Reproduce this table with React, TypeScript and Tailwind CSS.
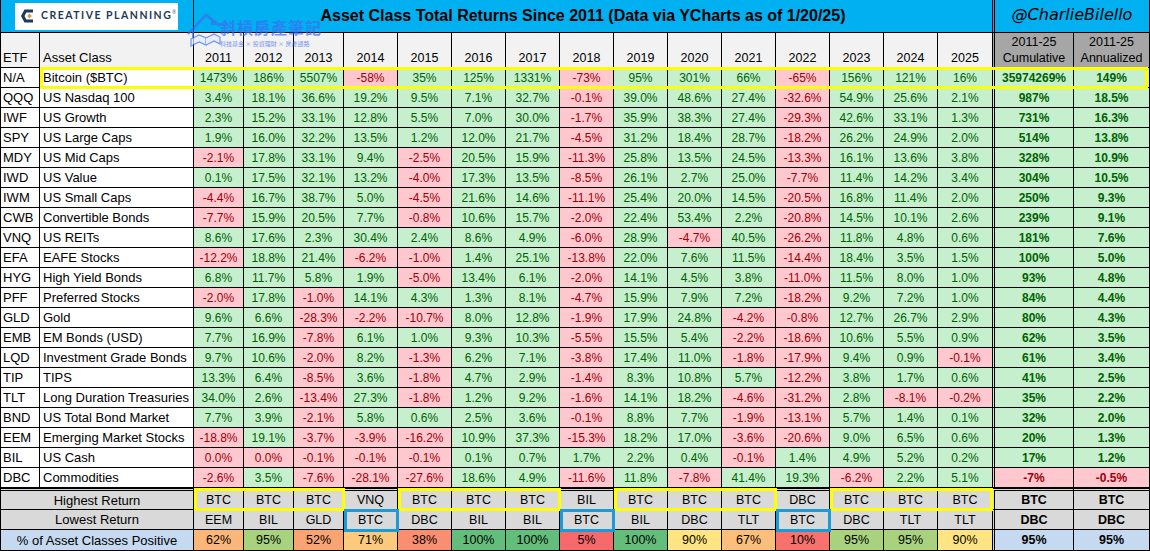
import React from 'react';

type Row = [string, string, string[], string, string];

const rows: Row[] = [
  ['N/A', 'Bitcoin ($BTC)', ['1473%', '186%', '5507%', '-58%', '35%', '125%', '1331%', '-73%', '95%', '301%', '66%', '-65%', '156%', '121%', '16%'], '35974269%', '149%'],
  ['QQQ', 'US Nasdaq 100', ['3.4%', '18.1%', '36.6%', '19.2%', '9.5%', '7.1%', '32.7%', '-0.1%', '39.0%', '48.6%', '27.4%', '-32.6%', '54.9%', '25.6%', '2.1%'], '987%', '18.5%'],
  ['IWF', 'US Growth', ['2.3%', '15.2%', '33.1%', '12.8%', '5.5%', '7.0%', '30.0%', '-1.7%', '35.9%', '38.3%', '27.4%', '-29.3%', '42.6%', '33.1%', '1.3%'], '731%', '16.3%'],
  ['SPY', 'US Large Caps', ['1.9%', '16.0%', '32.2%', '13.5%', '1.2%', '12.0%', '21.7%', '-4.5%', '31.2%', '18.4%', '28.7%', '-18.2%', '26.2%', '24.9%', '2.0%'], '514%', '13.8%'],
  ['MDY', 'US Mid Caps', ['-2.1%', '17.8%', '33.1%', '9.4%', '-2.5%', '20.5%', '15.9%', '-11.3%', '25.8%', '13.5%', '24.5%', '-13.3%', '16.1%', '13.6%', '3.8%'], '328%', '10.9%'],
  ['IWD', 'US Value', ['0.1%', '17.5%', '32.1%', '13.2%', '-4.0%', '17.3%', '13.5%', '-8.5%', '26.1%', '2.7%', '25.0%', '-7.7%', '11.4%', '14.2%', '3.4%'], '304%', '10.5%'],
  ['IWM', 'US Small Caps', ['-4.4%', '16.7%', '38.7%', '5.0%', '-4.5%', '21.6%', '14.6%', '-11.1%', '25.4%', '20.0%', '14.5%', '-20.5%', '16.8%', '11.4%', '2.0%'], '250%', '9.3%'],
  ['CWB', 'Convertible Bonds', ['-7.7%', '15.9%', '20.5%', '7.7%', '-0.8%', '10.6%', '15.7%', '-2.0%', '22.4%', '53.4%', '2.2%', '-20.8%', '14.5%', '10.1%', '2.6%'], '239%', '9.1%'],
  ['VNQ', 'US REITs', ['8.6%', '17.6%', '2.3%', '30.4%', '2.4%', '8.6%', '4.9%', '-6.0%', '28.9%', '-4.7%', '40.5%', '-26.2%', '11.8%', '4.8%', '0.6%'], '181%', '7.6%'],
  ['EFA', 'EAFE Stocks', ['-12.2%', '18.8%', '21.4%', '-6.2%', '-1.0%', '1.4%', '25.1%', '-13.8%', '22.0%', '7.6%', '11.5%', '-14.4%', '18.4%', '3.5%', '1.5%'], '100%', '5.0%'],
  ['HYG', 'High Yield Bonds', ['6.8%', '11.7%', '5.8%', '1.9%', '-5.0%', '13.4%', '6.1%', '-2.0%', '14.1%', '4.5%', '3.8%', '-11.0%', '11.5%', '8.0%', '1.0%'], '93%', '4.8%'],
  ['PFF', 'Preferred Stocks', ['-2.0%', '17.8%', '-1.0%', '14.1%', '4.3%', '1.3%', '8.1%', '-4.7%', '15.9%', '7.9%', '7.2%', '-18.2%', '9.2%', '7.2%', '1.0%'], '84%', '4.4%'],
  ['GLD', 'Gold', ['9.6%', '6.6%', '-28.3%', '-2.2%', '-10.7%', '8.0%', '12.8%', '-1.9%', '17.9%', '24.8%', '-4.2%', '-0.8%', '12.7%', '26.7%', '2.9%'], '80%', '4.3%'],
  ['EMB', 'EM Bonds (USD)', ['7.7%', '16.9%', '-7.8%', '6.1%', '1.0%', '9.3%', '10.3%', '-5.5%', '15.5%', '5.4%', '-2.2%', '-18.6%', '10.6%', '5.5%', '0.9%'], '62%', '3.5%'],
  ['LQD', 'Investment Grade Bonds', ['9.7%', '10.6%', '-2.0%', '8.2%', '-1.3%', '6.2%', '7.1%', '-3.8%', '17.4%', '11.0%', '-1.8%', '-17.9%', '9.4%', '0.9%', '-0.1%'], '61%', '3.4%'],
  ['TIP', 'TIPS', ['13.3%', '6.4%', '-8.5%', '3.6%', '-1.8%', '4.7%', '2.9%', '-1.4%', '8.3%', '10.8%', '5.7%', '-12.2%', '3.8%', '1.7%', '0.6%'], '41%', '2.5%'],
  ['TLT', 'Long Duration Treasuries', ['34.0%', '2.6%', '-13.4%', '27.3%', '-1.8%', '1.2%', '9.2%', '-1.6%', '14.1%', '18.2%', '-4.6%', '-31.2%', '2.8%', '-8.1%', '-0.2%'], '35%', '2.2%'],
  ['BND', 'US Total Bond Market', ['7.7%', '3.9%', '-2.1%', '5.8%', '0.6%', '2.5%', '3.6%', '-0.1%', '8.8%', '7.7%', '-1.9%', '-13.1%', '5.7%', '1.4%', '0.1%'], '32%', '2.0%'],
  ['EEM', 'Emerging Market Stocks', ['-18.8%', '19.1%', '-3.7%', '-3.9%', '-16.2%', '10.9%', '37.3%', '-15.3%', '18.2%', '17.0%', '-3.6%', '-20.6%', '9.0%', '6.5%', '0.6%'], '20%', '1.3%'],
  ['BIL', 'US Cash', ['~0.0%', '~0.0%', '-0.1%', '-0.1%', '-0.1%', '0.1%', '0.7%', '1.7%', '2.2%', '0.4%', '-0.1%', '1.4%', '4.9%', '5.2%', '0.2%'], '17%', '1.2%'],
  ['DBC', 'Commodities', ['-2.6%', '3.5%', '-7.6%', '-28.1%', '-27.6%', '18.6%', '4.9%', '-11.6%', '11.8%', '-7.8%', '41.4%', '19.3%', '-6.2%', '2.2%', '5.1%'], '-7%', '-0.5%'],
];

const years = ['2011', '2012', '2013', '2014', '2015', '2016', '2017', '2018', '2019', '2020', '2021', '2022', '2023', '2024', '2025'];
const highest = ['BTC', 'BTC', 'BTC', 'VNQ', 'BTC', 'BTC', 'BTC', 'BIL', 'BTC', 'BTC', 'BTC', 'DBC', 'BTC', 'BTC', 'BTC'];
const lowest = ['EEM', 'BIL', 'GLD', 'BTC', 'DBC', 'BIL', 'BIL', 'BTC', 'BIL', 'DBC', 'TLT', 'BTC', 'DBC', 'TLT', 'TLT'];
const pct: [string, string][] = [
  ['62%', 'bg-[#fbb77a]'],
  ['95%', 'bg-[#a9d27f]'],
  ['52%', 'bg-[#f9a472]'],
  ['71%', 'bg-[#fdc97d]'],
  ['38%', 'bg-[#f98f70]'],
  ['100%', 'bg-[#63be7b]'],
  ['100%', 'bg-[#63be7b]'],
  ['5%', 'bg-[#f8696b]'],
  ['100%', 'bg-[#63be7b]'],
  ['90%', 'bg-[#ffe483]'],
  ['67%', 'bg-[#fcbf7b]'],
  ['10%', 'bg-[#f8716c]'],
  ['95%', 'bg-[#a9d27f]'],
  ['95%', 'bg-[#a9d27f]'],
  ['90%', 'bg-[#ffe483]'],
];

const GREEN = 'bg-[#c6efce] text-[#006100]';
const RED = 'bg-[#ffc7ce] text-[#9c0006]';

function Logo() {
  return (
    <div className="flex h-[27px] w-[163px] items-center gap-[5px] bg-white pl-[5px]">
      <svg width="16" height="16" viewBox="0 0 16 16" className="shrink-0">
        <path d="M13 1.5 L4.5 1.5 L1 8 L4.5 14.5 L13 14.5 L13 11.5 L6.3 11.5 L4.5 8 L6.3 4.5 L13 4.5 Z" fill="#1f3a56" />
        <path d="M9.5 5.6 L11.8 8 L9.5 10.4 L7.3 8 Z" fill="#c9a04a" />
      </svg>
      <span className="whitespace-nowrap font-['Lato',sans-serif] text-[10.5px] font-bold tracking-[1.5px] text-[#1f3a56]">
        CREATIVE PLANNING
      </span>
      <span className="-ml-[5px] -mt-[6px] text-[5px] text-[#1f3a56]">®</span>
    </div>
  );
}

function Watermark() {
  return (
    <div className="pointer-events-none absolute left-[186px] top-[12px] flex items-start opacity-70">
      <svg width="40" height="36" viewBox="0 0 40 36" className="shrink-0">
        <path d="M2 22 L20 3 L34 14" fill="none" stroke="#3f6df0" strokeWidth="2.5" />
        <path d="M7 17 L7 26" fill="none" stroke="#3f6df0" strokeWidth="2" />
        <path d="M26 6 L26 12 L40 12" fill="none" stroke="#3f6df0" strokeWidth="2" />
        <path d="M5 27 L13 23 L20 26 L20 33 L13 30 L5 34 Z" fill="#e3ebff" stroke="#3f6df0" strokeWidth="1.2" />
        <path d="M20 26 L28 22 L34 25 L34 32 L28 29 L20 33" fill="#e3ebff" stroke="#3f6df0" strokeWidth="1.2" />
      </svg>
      <div className="-ml-[6px] mt-[6px] flex flex-col">
        <span className="whitespace-nowrap font-['Noto_Sans_CJK_TC',sans-serif] text-[16px] font-bold leading-[18px] tracking-[1px] text-[#3f6df0]">
          斜槓房產筆記
        </span>
        <span className="mt-[4px] whitespace-nowrap font-['Noto_Sans_CJK_TC',sans-serif] text-[6px] leading-[7px] text-[#3f6df0]">
          科技基金 × 投資理財 × 房產通路
        </span>
      </div>
    </div>
  );
}

function DataCell({ v, i }: { v: string; i: number }) {
  const red = v.startsWith('-') || v.startsWith('~');
  const text = v.replace('~', '');
  return (
    <div
      className={`flex h-[20px] items-center justify-center border-b border-black pt-[1px] text-[12px] ${i < 14 ? 'border-r' : ''} ${red ? RED : GREEN}`}
    >
      {text}
    </div>
  );
}

export default function App() {
  return (
    <div className="relative h-[551px] w-[1150px] overflow-hidden bg-white font-['Liberation_Sans',Arial,sans-serif] text-black">
      <div className="grid grid-cols-[40px_154px_50px_50px_50px_repeat(12,54px)_82px_76px]">
        {/* Title row */}
        <div className="col-span-2 flex h-[33px] items-center border-b border-l border-r border-black bg-[#00b0f0] pl-[14px]">
          <Logo />
        </div>
        <div className="col-span-15 flex h-[33px] items-center justify-center border-b border-black bg-[#00b0f0] pr-[20px] text-[16px] font-bold">
          Asset Class Total Returns Since 2011 (Data via YCharts as of 1/20/25)
        </div>
        <div className="col-span-2 flex h-[33px] items-center justify-center border-b border-l-[3px] border-r border-double border-black bg-[#00b0f0] pb-[2px] font-['DejaVu_Sans',sans-serif] text-[16px] italic">
          @CharlieBilello
        </div>

        {/* Header row */}
        <div className="flex h-[35px] items-end border-b border-l border-r border-black bg-[#f2f2f2] pb-[3px] pl-[2px] text-[13px] leading-none">
          ETF
        </div>
        <div className="flex h-[35px] items-end border-b border-r border-black bg-[#f2f2f2] pb-[3px] pl-[3px] text-[13px] leading-none">
          Asset Class
        </div>
        {years.map((y, i) => (
          <div
            key={y}
            className={`flex h-[35px] items-end justify-center border-b border-black bg-[#f2f2f2] pb-[3px] text-[12.5px] leading-none ${i < 14 ? 'border-r' : ''}`}
          >
            {y}
          </div>
        ))}
        <div className="flex h-[35px] flex-col items-center justify-end border-b border-l-[3px] border-r border-double border-black bg-[#a6a6a6] pb-[1px] text-[12.5px] leading-[16px]">
          <span>2011-25</span>
          <span>Cumulative</span>
        </div>
        <div className="flex h-[35px] flex-col items-center justify-end border-b border-r border-black bg-[#a6a6a6] pb-[1px] text-[12.5px] leading-[16px]">
          <span>2011-25</span>
          <span>Annualized</span>
        </div>

        {/* Data rows */}
        {rows.map(([etf, name, vals, cum, ann]) => {
          const neg = cum.startsWith('-');
          return (
            <React.Fragment key={etf + name}>
              <div className="flex h-[20px] items-center border-b border-l border-r border-black pl-[2px] pt-[1px] text-[13px]">
                {etf}
              </div>
              <div className="flex h-[20px] items-center border-b border-r border-black pl-[3px] pt-[1px] text-[13px]">
                {name}
              </div>
              {vals.map((v, i) => (
                <DataCell key={i} v={v} i={i} />
              ))}
              <div
                className={`flex h-[20px] items-center justify-center border-b border-l-[3px] border-r border-double border-black pt-[1px] text-[12px] font-bold ${neg ? RED : GREEN}`}
              >
                {cum}
              </div>
              <div
                className={`flex h-[20px] items-center justify-center border-b border-r border-black pt-[1px] text-[12px] font-bold ${neg ? RED : GREEN}`}
              >
                {ann}
              </div>
            </React.Fragment>
          );
        })}

        {/* Highest return */}
        <div className="col-span-2 flex h-[22px] items-center justify-center border-b border-l border-r border-t-[3px] border-double border-black bg-[#d9d9d9] pt-[1px] text-[13px]">
          Highest Return
        </div>
        {highest.map((h, i) => (
          <div
            key={i}
            className={`flex h-[22px] items-center justify-center border-b border-t-[3px] border-double border-black bg-[#d9d9d9] pt-[1px] text-[12.5px] ${i < 14 ? 'border-r' : ''}`}
          >
            {h}
          </div>
        ))}
        <div className="flex h-[22px] items-center justify-center border-b border-l-[3px] border-r border-t-[3px] border-double border-black bg-[#d9d9d9] pt-[1px] text-[12.5px] font-bold">
          BTC
        </div>
        <div className="flex h-[22px] items-center justify-center border-b border-r border-t-[3px] border-double border-black bg-[#d9d9d9] pt-[1px] text-[12.5px] font-bold">
          BTC
        </div>

        {/* Lowest return */}
        <div className="col-span-2 flex h-[20px] items-center justify-center border-b border-l border-r border-black bg-[#d9d9d9] pt-[1px] text-[13px]">
          Lowest Return
        </div>
        {lowest.map((h, i) => (
          <div
            key={i}
            className={`flex h-[20px] items-center justify-center border-b border-black bg-[#d9d9d9] pt-[1px] text-[12.5px] ${i < 14 ? 'border-r' : ''}`}
          >
            {h}
          </div>
        ))}
        <div className="flex h-[20px] items-center justify-center border-b border-l-[3px] border-r border-double border-black bg-[#d9d9d9] pt-[1px] text-[12.5px] font-bold">
          DBC
        </div>
        <div className="flex h-[20px] items-center justify-center border-b border-r border-black bg-[#d9d9d9] pt-[1px] text-[12.5px] font-bold">
          DBC
        </div>

        {/* % positive */}
        <div className="col-span-2 flex h-[21px] items-center justify-center border-b border-l border-r border-black bg-[#c5d9f1] pt-[1px] text-[13px]">
          % of Asset Classes Positive
        </div>
        {pct.map(([p, c], i) => (
          <div
            key={i}
            className={`flex h-[21px] items-center justify-center border-b border-black pt-[1px] text-[12.5px] ${i < 14 ? 'border-r' : ''} ${c}`}
          >
            {p}
          </div>
        ))}
        <div className="flex h-[21px] items-center justify-center border-b border-l-[3px] border-r border-double border-black bg-[#c5d9f1] pt-[1px] text-[12.5px] font-bold">
          95%
        </div>
        <div className="flex h-[21px] items-center justify-center border-b border-r border-black bg-[#c5d9f1] pt-[1px] text-[12.5px] font-bold">
          95%
        </div>
      </div>

      {/* Highlight overlays */}
      <div className="pointer-events-none absolute left-[40px] top-[67px] h-[22px] w-[1108px] border-[3px] border-[#ffff00]" />
      <div className="pointer-events-none absolute left-[194px] top-[488px] h-[23px] w-[151px] border-[3px] border-[#ffff00]" />
      <div className="pointer-events-none absolute left-[398px] top-[488px] h-[23px] w-[163px] border-[3px] border-[#ffff00]" />
      <div className="pointer-events-none absolute left-[614px] top-[488px] h-[23px] w-[163px] border-[3px] border-[#ffff00]" />
      <div className="pointer-events-none absolute left-[830px] top-[488px] h-[23px] w-[163px] border-[3px] border-[#ffff00]" />
      <div className="pointer-events-none absolute left-[344px] top-[509px] h-[23px] w-[55px] border-[3px] border-[#1a9ad9]" />
      <div className="pointer-events-none absolute left-[560px] top-[509px] h-[23px] w-[55px] border-[3px] border-[#1a9ad9]" />
      <div className="pointer-events-none absolute left-[776px] top-[509px] h-[23px] w-[55px] border-[3px] border-[#1a9ad9]" />

      <Watermark />
    </div>
  );
}
